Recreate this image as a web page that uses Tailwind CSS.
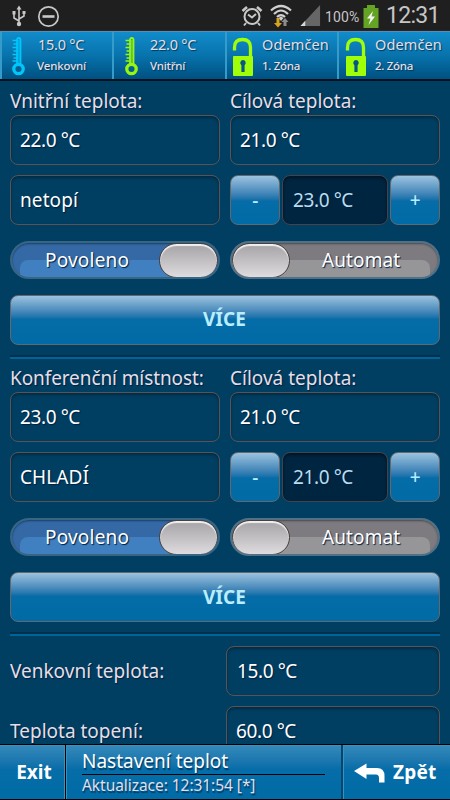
<!DOCTYPE html>
<html lang="cs">
<head>
<meta charset="utf-8">
<title>Nastavení teplot</title>
<script src="https://cdn.jsdelivr.net/npm/@tailwindcss/browser@4"></script>
</head>
<body class="w-[450px] h-[800px] overflow-hidden bg-[#003f62] font-['Noto_Sans','Open_Sans',sans-serif] text-[19px] leading-6 tracking-[-0.4px] text-[#e4dfe6] whitespace-nowrap">
<svg class="hidden">
  <symbol id="thermo" viewBox="0 0 16 40">
    <path d="M2.500 3.500H8M3.500 7H8M2.500 10.500H8M3.500 14H8M2.500 17.500H8M3.500 21H8M2.500 24H8" stroke="currentColor" stroke-width="1.500"/>
    <path d="M7 27V3Q7 1 8.700 1Q10.500 1 10.500 3V27" fill="none" stroke="currentColor" stroke-width="1.800"/>
    <circle cx="8.500" cy="32" r="4.700" fill="none" stroke="currentColor" stroke-width="3.300"/>
    <path d="M8.800 3V27" stroke="currentColor" stroke-width="2" opacity=".6"/>
  </symbol>
  <symbol id="lock" viewBox="0 0 22 40">
    <path d="M2.500 13.500V10.500Q2.500 2.500 10.500 2.500Q18.500 2.500 18.500 10.500V20" fill="none" stroke="#a0ff08" stroke-width="3.300"/>
    <rect x="1" y="19" width="20" height="20" rx="1" fill="#a0ff08"/>
    <path d="M11 23a2.900 2.900 0 0 1 1.600 5.200V35H9.400V28.200A2.900 2.900 0 0 1 11 23Z" fill="#075785"/>
  </symbol>
</svg>
<div class="flex h-full flex-col">
  <header class="flex h-[31px] shrink-0 items-center border-b border-[#4c1714] bg-[#1f1f1f]">
    <svg class="ml-3 h-[22px] w-[14px] mt-[2px]" viewBox="0 0 14 22" fill="none" stroke="#c8c8c8" stroke-width="1.600">
      <path d="M7 3V19M7 16L2 13V8M7 14L12 11V7"/><path d="M4.500 4.500L7 .5L9.500 4.500ZM.5 6H3.500V9.500H.5ZM10.500 6H13.500V9H10.500Z" fill="#c8c8c8" stroke="none"/><circle cx="7" cy="19" r="2.200" fill="#c8c8c8" stroke="none"/>
    </svg>
    <svg class="ml-[11px] mt-[2px] size-[23px]" viewBox="0 0 23 23" fill="none" stroke="#c8c8c8"><circle cx="11.500" cy="11.500" r="9.700" stroke-width="1.700"/><path d="M5.500 11.500H17.500" stroke-width="2.600"/></svg>
    <svg class="ml-[181px] mt-[2px] h-[22px] w-[22px]" viewBox="0 0 22 22" fill="none" stroke="#c8c8c8" stroke-width="2">
      <circle cx="11" cy="11.500" r="7.500"/><path d="M1.500 6L6 2M20.500 6L16 2" stroke-width="2.600"/><path d="M5 18L3 20.500M17 18L19 20.500M7 9.500L11 12.500L15 9"/>
    </svg>
    <svg class="ml-[7px] mt-[2px] h-[24px] w-[24px]" viewBox="0 0 24 24" fill="none" stroke="#cfcfcf" stroke-width="2.200">
      <path d="M1 6.500Q11-2.500 21 6.500M4 10Q11 3 18 10M7 13Q11 9 15 13"/><path d="M8.500 14L11 17L13.500 14L11 12.500Z" fill="#cfcfcf" stroke="none"/>
      <path d="M6.500 14H9.500V19H12L8 23.500L4 19H6.500Z" fill="#d6a51f" stroke="none"/><path d="M13.500 22V18H11.500L15 14L18.500 18H16.500V22Z" fill="#8c8c8c" stroke="none"/>
    </svg>
    <svg class="ml-[6px] mt-px h-[21px] w-[21px]" viewBox="0 0 21 22"><path d="M0 22L20.500 0V22Z" fill="#666"/><path d="M0 22L5 16.500V22Z" fill="#d8d8d8"/></svg>
    <span class="ml-1 mt-[3px] w-[36px] font-[Roboto,sans-serif] text-[14px] tracking-[0.1px] text-[#c6c6c6]">100%</span>
    <svg class="ml-[2px] mt-[2px] h-[23px] w-[16px]" viewBox="0 0 16 23"><path d="M4 0H12V3H15.500V23H.5V3H4Z" fill="#64a324"/><path d="M10 6L4 13.500H7.500L5.500 20L12 11.500H8.500Z" fill="#f3f3f3"/></svg>
    <span class="ml-[7px] mt-[2px] font-[Roboto,sans-serif] text-[23px] tracking-[-0.7px] text-[#c6c6c6]">12:31</span>
  </header>

  <nav class="grid h-[50px] shrink-0 grid-cols-[112px_113px_112px_113px] border-b-2 border-[#00121d] text-[14.500px] leading-[22px] [text-shadow:1px_1px_1px_#003a5c]">
    <div class="flex border-l-2 border-t border-[#359bc8] bg-linear-to-b from-[#118ccb] via-[#0873ac] to-[#005181] pl-[8px]">
      <svg class="mt-[5px] h-[40px] w-[16px] text-[#00c6fa]"><use href="#thermo"/></svg>
      <div class="ml-[12px] mt-px"><div class="tracking-[-0.25px]">15.0 °C</div><div class="-ml-px text-[11.500px] font-medium tracking-[-0.15px]">Venkovní</div></div>
    </div>
    <div class="flex border-l-2 border-t border-[#359bc8] bg-linear-to-b from-[#118ccb] via-[#0873ac] to-[#005181] pl-[9px]">
      <svg class="mt-[5px] h-[40px] w-[16px] text-[#98f60c]"><use href="#thermo"/></svg>
      <div class="ml-[11px] mt-px"><div class="tracking-[-0.25px]">22.0 °C</div><div class="text-[11.500px] font-medium tracking-[-0.25px]">Vnitřní</div></div>
    </div>
    <div class="flex border-l-2 border-t border-[#359bc8] bg-linear-to-b from-[#118ccb] via-[#0873ac] to-[#005181] pl-[5px]">
      <svg class="mt-[5px] h-[40px] w-[22px]"><use href="#lock"/></svg>
      <div class="ml-[8px] mt-px"><div class="tracking-[0.1px]">Odemčen</div><div class="text-[11.500px] font-medium tracking-[-0.3px]">1. Zóna</div></div>
    </div>
    <div class="flex border-l-2 border-t border-[#359bc8] bg-linear-to-b from-[#118ccb] via-[#0873ac] to-[#005181] pl-[6px]">
      <svg class="mt-[5px] h-[40px] w-[22px]"><use href="#lock"/></svg>
      <div class="ml-[8px] mt-px"><div class="tracking-[0.1px]">Odemčen</div><div class="text-[11.500px] font-medium tracking-[-0.3px]">2. Zóna</div></div>
    </div>
  </nav>

  <main class="min-h-0 flex-1 overflow-hidden px-[10px] [text-shadow:1px_1px_1px_#001f40]">
    <section class="h-[277px]">
      <div class="grid grid-cols-2 gap-x-[10px]">
        <div class="h-[34px] pt-[8px] tracking-[0px]">Vnitřní teplota:</div>
        <div class="h-[34px] pt-[8px] tracking-[0px]">Cílová teplota:</div>
        <div class="flex h-[50px] items-center rounded-[8px] border border-[#5b5352] pl-[9px] text-white shadow-[inset_0_2px_3px_#002b45]">22.0 °C</div>
        <div class="flex h-[50px] items-center rounded-[8px] border border-[#5b5352] pl-[9px] text-white shadow-[inset_0_2px_3px_#002b45]">21.0 °C</div>
        <div class="mt-[10px] flex h-[50px] items-center rounded-[8px] border border-[#5b5352] pl-[9px] tracking-[0.1px] text-white shadow-[inset_0_2px_3px_#002b45]">netopí</div>
        <div class="mt-[10px] flex h-[50px]">
          <button class="w-[50px] rounded-[8px] border border-[#64686d] bg-linear-to-b from-[#9bc3df] via-[#056ca7] via-52% to-[#006ba6] font-medium text-[#b9edff]">-</button>
          <div class="ml-[2px] flex w-[106px] items-center rounded-[8px] border border-[#454348] bg-[#002540] pl-[10px] text-[#b8ddec] shadow-[inset_0_2px_3px_#001426]">23.0 °C</div>
          <button class="ml-auto w-[50px] rounded-[8px] border border-[#64686d] bg-linear-to-b from-[#9bc3df] via-[#056ca7] via-52% to-[#006ba6] font-medium text-[#b9edff]">+</button>
        </div>
      </div>
      <div class="mt-[16px] grid grid-cols-2 gap-x-[10px] text-white">
        <div class="relative flex h-[38px] items-center justify-end overflow-hidden rounded-full border-2 border-[#386581] bg-[#3469a5] shadow-[inset_0_1px_2px_#173d69]">
          <span class="absolute bottom-0 left-[8px] right-0 h-[17px] rounded-tl-[8px] bg-[#407fc0]"></span>
          <span class="absolute left-[33px] tracking-[0.2px]">Povoleno</span>
          <span class="relative h-[35px] w-[59px] rounded-full border border-[#49403f] bg-linear-to-b from-[#a5a3a6] to-[#dedcdf] shadow-[inset_0_2px_1px_#f1f1f1]"></span>
        </div>
        <div class="relative flex h-[38px] items-center overflow-hidden rounded-full border-2 border-[#527187] bg-[#7d7b7f] shadow-[inset_0_1px_2px_#4a484a]">
          <span class="absolute bottom-0 left-0 right-[8px] h-[17px] rounded-tr-[8px] bg-[#969598]"></span>
          <span class="absolute left-[90px] tracking-[0.1px]">Automat</span>
          <span class="relative h-[35px] w-[58px] rounded-full border border-[#49403f] bg-linear-to-b from-[#a5a3a6] to-[#dedcdf] shadow-[inset_0_2px_1px_#f1f1f1]"></span>
        </div>
      </div>
      <button class="mt-[16px] block h-[50px] w-full rounded-[8px] border border-[#64686d] bg-linear-to-b from-[#9bc3df] via-[#056ca7] via-48% to-[#006ba6] pb-[2px] pr-px font-bold tracking-[0.1px] text-[#b9edff]">VÍCE</button>
      <div class="mt-[10px] h-[4px] border-y-2 border-t-[#00304b] border-b-[#00649b]"></div>
    </section>

    <section class="h-[277px]">
      <div class="grid grid-cols-2 gap-x-[10px]">
        <div class="h-[34px] pt-[8px] tracking-[-0.1px]">Konferenční místnost:</div>
        <div class="h-[34px] pt-[8px] tracking-[0px]">Cílová teplota:</div>
        <div class="flex h-[50px] items-center rounded-[8px] border border-[#5b5352] pl-[9px] text-white shadow-[inset_0_2px_3px_#002b45]">23.0 °C</div>
        <div class="flex h-[50px] items-center rounded-[8px] border border-[#5b5352] pl-[9px] text-white shadow-[inset_0_2px_3px_#002b45]">21.0 °C</div>
        <div class="mt-[10px] flex h-[50px] items-center rounded-[8px] border border-[#5b5352] pl-[9px] tracking-[0.1px] text-white shadow-[inset_0_2px_3px_#002b45]">CHLADÍ</div>
        <div class="mt-[10px] flex h-[50px]">
          <button class="w-[50px] rounded-[8px] border border-[#64686d] bg-linear-to-b from-[#9bc3df] via-[#056ca7] via-52% to-[#006ba6] font-medium text-[#b9edff]">-</button>
          <div class="ml-[2px] flex w-[106px] items-center rounded-[8px] border border-[#454348] bg-[#002540] pl-[10px] text-[#b8ddec] shadow-[inset_0_2px_3px_#001426]">21.0 °C</div>
          <button class="ml-auto w-[50px] rounded-[8px] border border-[#64686d] bg-linear-to-b from-[#9bc3df] via-[#056ca7] via-52% to-[#006ba6] font-medium text-[#b9edff]">+</button>
        </div>
      </div>
      <div class="mt-[16px] grid grid-cols-2 gap-x-[10px] text-white">
        <div class="relative flex h-[38px] items-center justify-end overflow-hidden rounded-full border-2 border-[#386581] bg-[#3469a5] shadow-[inset_0_1px_2px_#173d69]">
          <span class="absolute bottom-0 left-[8px] right-0 h-[17px] rounded-tl-[8px] bg-[#407fc0]"></span>
          <span class="absolute left-[33px] tracking-[0.2px]">Povoleno</span>
          <span class="relative h-[35px] w-[59px] rounded-full border border-[#49403f] bg-linear-to-b from-[#a5a3a6] to-[#dedcdf] shadow-[inset_0_2px_1px_#f1f1f1]"></span>
        </div>
        <div class="relative flex h-[38px] items-center overflow-hidden rounded-full border-2 border-[#527187] bg-[#7d7b7f] shadow-[inset_0_1px_2px_#4a484a]">
          <span class="absolute bottom-0 left-0 right-[8px] h-[17px] rounded-tr-[8px] bg-[#969598]"></span>
          <span class="absolute left-[90px] tracking-[0.1px]">Automat</span>
          <span class="relative h-[35px] w-[58px] rounded-full border border-[#49403f] bg-linear-to-b from-[#a5a3a6] to-[#dedcdf] shadow-[inset_0_2px_1px_#f1f1f1]"></span>
        </div>
      </div>
      <button class="mt-[16px] block h-[50px] w-full rounded-[8px] border border-[#64686d] bg-linear-to-b from-[#9bc3df] via-[#056ca7] via-48% to-[#006ba6] pr-px font-bold tracking-[0.1px] text-[#b9edff]">VÍCE</button>
      <div class="mt-[10px] h-[4px] border-y-2 border-t-[#00304b] border-b-[#00649b]"></div>
    </section>

    <section class="grid grid-cols-[216px_214px] items-center gap-y-[10px] pt-[11px]">
      <div class="tracking-[0px]">Venkovní teplota:</div>
      <div class="flex h-[50px] items-center rounded-[8px] border border-[#5b5352] pl-[10px] text-white shadow-[inset_0_2px_3px_#002b45]">15.0 °C</div>
      <div class="tracking-[0px]">Teplota topení:</div>
      <div class="flex h-[50px] items-center rounded-[8px] border border-[#5b5352] pl-[9px] text-white shadow-[inset_0_2px_3px_#002b45]">60.0 °C</div>
    </section>
  </main>

  <footer class="flex h-[56px] shrink-0 border-y border-black text-white [text-shadow:1px_2px_1px_#003b65]">
    <button class="w-[66px] border-r border-black bg-linear-to-b from-[#348abb] via-[#066da8] via-45% to-[#006ba6] pl-[3px] font-bold tracking-[0px] shadow-[inset_-1px_1px_0_#3992bd]">Exit</button>
    <div class="w-[275px] bg-linear-to-b from-[#348abb] via-[#066da8] via-45% to-[#006ba6] pl-[16px] pt-[4px] shadow-[inset_1px_1px_0_#3992bd]">
      <div class="h-[26px] w-[243px] border-b border-black tracking-[0px]">Nastavení teplot</div>
      <div class="text-[15.500px] leading-[21px] tracking-[-0.05px] text-[#e2dfe9]">Aktualizace: 12:31:54 [*]</div>
    </div>
    <button class="flex flex-1 items-center border-l-2 border-[#00466e] bg-linear-to-b from-[#348abb] via-[#066da8] via-45% to-[#006ba6] pl-[11px] font-bold shadow-[inset_1px_1px_0_#3992bd]">
      <svg class="mt-[2px] h-[22px] w-[32px]" viewBox="0 0 32 22"><path d="M0 9L12.500 1.500V6H23Q30.500 6 30.500 14V20.500H25V16Q25 12.500 22 12.500H12.500V17Z" fill="white"/></svg>
      <span class="ml-[7px] tracking-[0.2px]">Zpět</span>
    </button>
  </footer>
</div>
</body>
</html>
